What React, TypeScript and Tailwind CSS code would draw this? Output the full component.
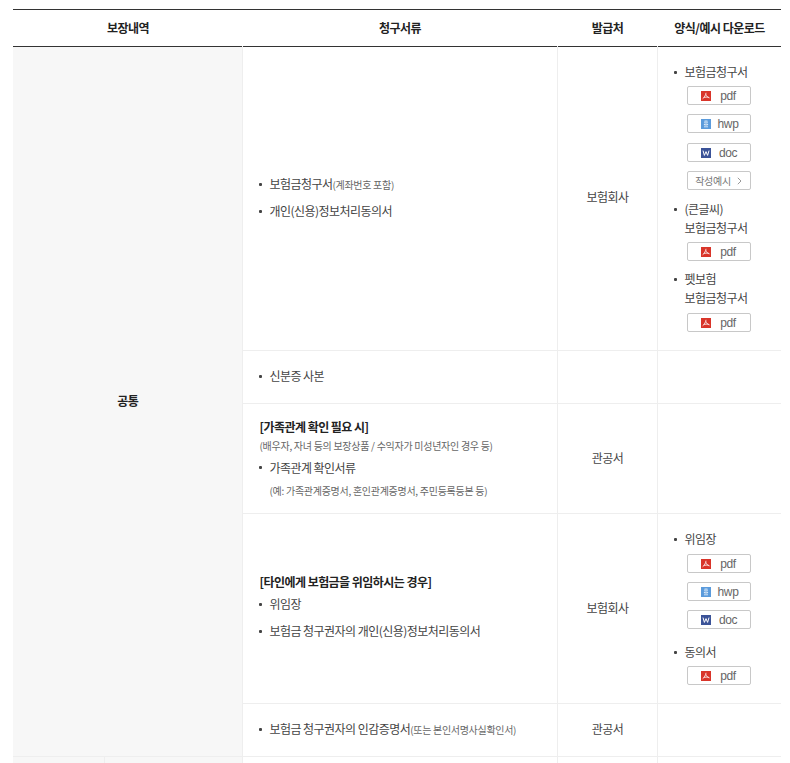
function PdfIcon() {
  return (
    <svg width="10" height="10" viewBox="0 0 10 10" className="shrink-0">
      <rect width="10" height="10" fill="#d9352a" />
      <path d="M5 1.8 C4.8 3.8 3.6 6.2 1.6 7.8 M5 3.4 C5.4 5.2 6.6 6.6 8.6 6.9 M2.8 6.7 C4 6.1 6 5.9 7.8 6.3" stroke="#fff" strokeWidth="0.8" fill="none" />
    </svg>
  );
}

function HwpIcon() {
  return (
    <svg width="10" height="10" viewBox="0 0 10 10" className="shrink-0">
      <rect width="10" height="10" fill="#5b9bdc" />
      <path d="M3.5 2h3M3 3.2h4M3.4 5h3.2v1H3.4zM3 7.8h4" stroke="#fff" strokeWidth="0.7" fill="none" />
    </svg>
  );
}

function DocIcon() {
  return (
    <svg width="10" height="10" viewBox="0 0 10 10" className="shrink-0">
      <rect width="10" height="10" fill="#3b5398" />
      <path d="M2 2.6 L3.4 7.4 L5 3.6 L6.6 7.4 L8 2.6" stroke="#fff" strokeWidth="1" fill="none" />
    </svg>
  );
}

function FileBtn({ type, className = "" }: { type: "pdf" | "hwp" | "doc"; className?: string }) {
  return (
    <div className={`ml-[14px] flex h-[19px] w-[64px] items-center rounded-[2px] border border-[#c8c8c8] pl-[13px] ${className}`}>
      {type === "pdf" && <PdfIcon />}
      {type === "hwp" && <HwpIcon />}
      {type === "doc" && <DocIcon />}
      <span className="flex-1 pr-[4px] text-center font-['Liberation_Sans',sans-serif] text-[12px] leading-none tracking-[-0.4px] text-[#666]">{type}</span>
    </div>
  );
}

function Item({ children, className = "" }: { children: React.ReactNode; className?: string }) {
  return (
    <div className={`flex items-center text-[12px] tracking-[-0.55px] text-[#444] ${className}`}>
      <span className="mr-[8px] ml-[1px] h-[3px] w-[3px] shrink-0 rounded-[1px] bg-[#444]" />
      {children}
    </div>
  );
}

function Small({ children }: { children: React.ReactNode }) {
  return <span className="text-[10px] tracking-[-0.3px] text-[#666]">{children}</span>;
}

const cell = "border-r border-b border-[#eeeeee] align-middle";
const lastCell = "border-b border-[#eeeeee] align-middle";
const center = "pb-[2px] pl-[1px] text-center text-[12px] tracking-[-0.5px] text-[#444]";

export default function App() {
  return (
    <div className="h-[763px] overflow-hidden bg-white pt-[9px] pl-[13px] font-['Noto_Sans_CJK_KR','Noto_Sans',sans-serif]">
      <table className="w-[768px] table-fixed border-collapse">
        <colgroup>
          <col className="w-[91px]" />
          <col className="w-[138px]" />
          <col className="w-[315px]" />
          <col className="w-[100px]" />
          <col className="w-[124px]" />
        </colgroup>
        <thead>
          <tr className="h-[37px] border-t border-b border-[#333] text-[12px] tracking-[-0.5px] text-[#222]">
            <th colSpan={2} className="pb-[1px] pl-[1px] font-bold">보장내역</th>
            <th className="pb-[1px] pl-[1px] font-bold">청구서류</th>
            <th className="pb-[1px] pl-[1px] font-bold">발급처</th>
            <th className="pb-[1px] pl-[1px] font-bold">양식/예시 다운로드</th>
          </tr>
        </thead>
        <tbody>
          <tr className="h-[304px]">
            <td colSpan={2} rowSpan={5} className={`${cell} bg-[#f7f7f7] pb-[2px] pl-[1px] text-center text-[12px] font-bold tracking-[-0.5px] text-[#222]`}>공통</td>
            <td className={`${cell} pb-[2px] pl-[15px]`}>
              <Item>
                <span>보험금청구서</span>
                <Small>(계좌번호 포함)</Small>
              </Item>
              <Item className="mt-[9px]">개인(신용)정보처리동의서</Item>
            </td>
            <td className={`${cell} ${center} !pb-[4px]`}>보험회사</td>
            <td className={`${lastCell} pt-[16px] pl-[15px] !align-top`}>
              <Item>보험금청구서</Item>
              <FileBtn type="pdf" className="mt-[5px]" />
              <FileBtn type="hwp" className="mt-[9px]" />
              <FileBtn type="doc" className="mt-[10px]" />
              <div className="mt-[9px] ml-[14px] flex h-[19px] w-[64px] items-center justify-center rounded-[2px] border border-[#c8c8c8] text-[10px] tracking-[-0.3px] text-[#777]">
                작성예시
                <svg width="5" height="8" viewBox="0 0 5 8" className="ml-[6px]">
                  <path d="M0.8 0.8 L4 4 L0.8 7.2" stroke="#999" strokeWidth="1" fill="none" />
                </svg>
              </div>
              <Item className="mt-[10px]">(큰글씨)</Item>
              <div className="mt-[1px] ml-[12px] text-[12px] tracking-[-0.55px] text-[#444]">보험금청구서</div>
              <FileBtn type="pdf" className="mt-[5px]" />
              <Item className="mt-[9px]">펫보험</Item>
              <div className="mt-[1px] ml-[12px] text-[12px] tracking-[-0.55px] text-[#444]">보험금청구서</div>
              <FileBtn type="pdf" className="mt-[6px]" />
            </td>
          </tr>
          <tr className="h-[53px]">
            <td className={`${cell} pb-[2px] pl-[15px]`}><Item>신분증 사본</Item></td>
            <td className={cell} />
            <td className={lastCell} />
          </tr>
          <tr className="h-[110px]">
            <td className={`${cell} pb-[2px] pl-[17px]`}>
              <div className="text-[12px] font-bold tracking-[-0.55px] text-[#222]">[가족관계 확인 필요 시]</div>
              <div className="mt-[2px] text-[10px] tracking-[-0.28px] text-[#666]">(배우자, 자녀 등의 보장상품 / 수익자가 미성년자인 경우 등)</div>
              <Item className="mt-[6px] -ml-[2px]">가족관계 확인서류</Item>
              <div className="mt-[6px] ml-[10px] text-[10px] tracking-[-0.28px] text-[#666]">(예: 가족관계증명서, 혼인관계증명서, 주민등록등본 등)</div>
            </td>
            <td className={`${cell} ${center}`}>관공서</td>
            <td className={lastCell} />
          </tr>
          <tr className="h-[190px]">
            <td className={`${cell} pb-[4px] pl-[15px]`}>
              <div className="ml-[2px] text-[12px] font-bold tracking-[-0.55px] text-[#222]">[타인에게 보험금을 위임하시는 경우]</div>
              <Item className="mt-[4px]">위임장</Item>
              <Item className="mt-[9px]">보험금 청구권자의 개인(신용)정보처리동의서</Item>
            </td>
            <td className={`${cell} ${center}`}>보험회사</td>
            <td className={`${lastCell} pt-[16px] pl-[15px] !align-top`}>
              <Item>위임장</Item>
              <FileBtn type="pdf" className="mt-[6px]" />
              <FileBtn type="hwp" className="mt-[9px]" />
              <FileBtn type="doc" className="mt-[9px]" />
              <Item className="mt-[14px]">동의서</Item>
              <FileBtn type="pdf" className="mt-[5px]" />
            </td>
          </tr>
          <tr className="h-[53px]">
            <td className={`${cell} pb-[2px] pl-[15px]`}>
              <Item>
                <span>보험금 청구권자의 인감증명서</span>
                <Small>(또는 본인서명사실확인서)</Small>
              </Item>
            </td>
            <td className={`${cell} ${center}`}>관공서</td>
            <td className={lastCell} />
          </tr>
          <tr className="h-[40px]">
            <td className={`${cell} bg-[#f7f7f7]`} />
            <td className={`${cell} bg-[#f7f7f7]`} />
            <td className={cell} />
            <td className={cell} />
            <td className={lastCell} />
          </tr>
        </tbody>
      </table>
    </div>
  );
}
